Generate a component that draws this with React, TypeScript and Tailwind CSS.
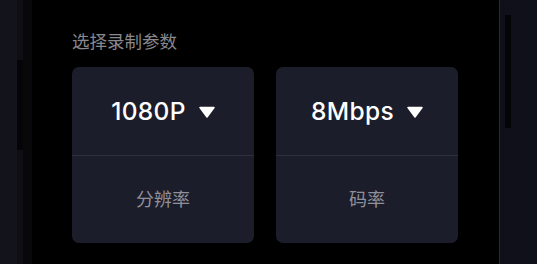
import React from "react";

function Caret() {
  return (
    <svg width="16" height="12" viewBox="0 0 16 12" className="ml-[13px] mt-[1px]">
      <path d="M1 1.5 H15 L8 11 Z" fill="#ffffff" strokeLinejoin="round" stroke="#ffffff" strokeWidth="1.5" />
    </svg>
  );
}

function Card({ value, label }: { value: string; label: string }) {
  return (
    <div className="w-[182px] h-[176px] rounded-[7px] bg-[#1c1d2a] flex flex-col">
      <div className="h-[88px] flex items-center justify-center">
        <span className="text-[24.5px] font-medium text-white leading-none tracking-[0.3px]">{value}</span>
        <Caret />
      </div>
      <div className="h-px bg-[#2f303e]" />
      <div className="flex-1 flex items-center justify-center">
        <span className="text-[18px] text-[#8f909a] leading-none">{label}</span>
      </div>
    </div>
  );
}

export default function App() {
  return (
    <div
      className="w-[537px] h-[264px] bg-black flex overflow-hidden"
      style={{ fontFamily: 'Inter, "Noto Sans CJK SC", "Noto Sans", sans-serif' }}
    >
      <div className="w-[32px] h-full flex">
        <div className="w-[17px] h-full bg-[#13131b]" />
        <div className="w-[6px] h-full bg-[#0e0e14] flex flex-col">
          <div className="h-[60px]" />
          <div className="h-[90px] bg-[#050507]" />
        </div>
        <div className="w-[9px] h-full bg-[#08080b]" />
      </div>
      <div className="flex-1 pl-[40px] pt-[31px]">
        <div className="text-[17.5px] text-[#88888e] leading-[22px]">选择录制参数</div>
        <div className="mt-[14px] flex gap-[22px]">
          <Card value="1080P" label="分辨率" />
          <Card value="8Mbps" label="码率" />
        </div>
      </div>
      <div className="w-px h-full bg-[#2a2a30]" />
      <div className="w-[37px] h-full bg-[#10101a] flex">
        <div className="w-[5px]" />
        <div className="w-[6px] flex flex-col">
          <div className="h-[15px]" />
          <div className="h-[113px] bg-[#040406]" />
        </div>
      </div>
    </div>
  );
}
